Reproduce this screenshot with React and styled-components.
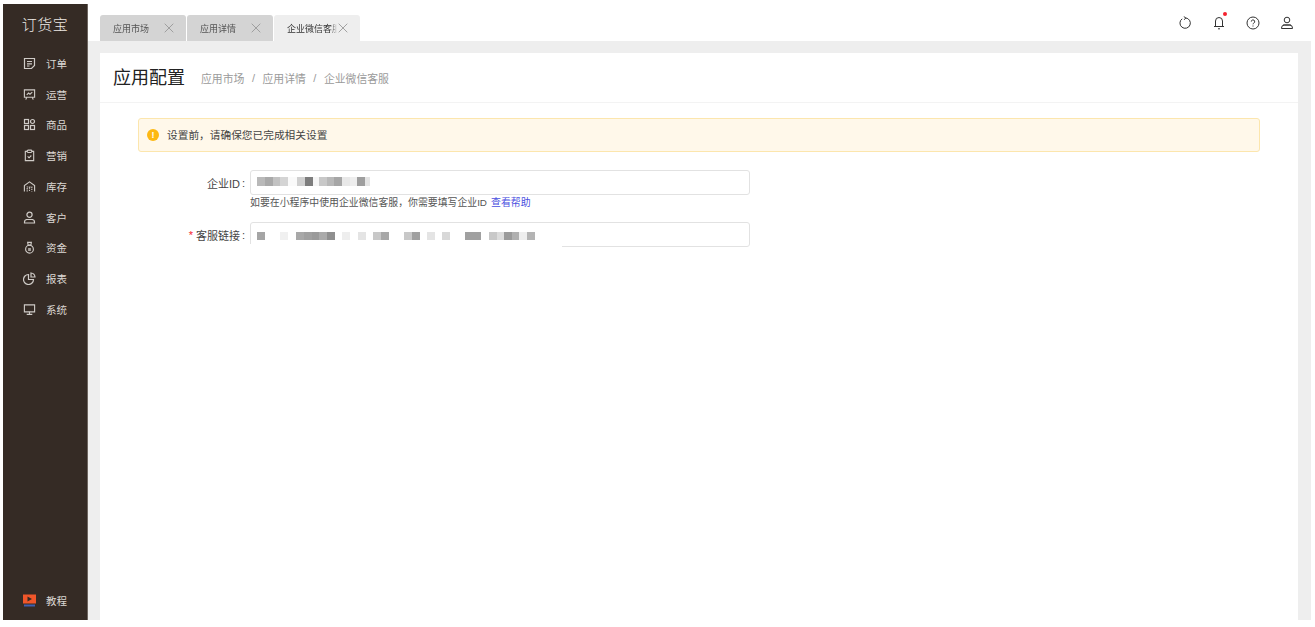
import { Component } from "react";
import styled, { createGlobalStyle } from "styled-components";

const GlobalStyle = createGlobalStyle`
  html, body {
    margin: 0;
    padding: 0;
    background: #fff;
  }
  * {
    box-sizing: border-box;
  }
  body {
    font-family: "Liberation Sans", "Noto Sans CJK SC", sans-serif;
  }
`;

const Page = styled.div`
  display: flex;
  width: 1315px;
  height: 627px;
  padding: 4px 4px 7px 3px;
  overflow: hidden;
`;

const Sidebar = styled.nav`
  display: flex;
  flex-direction: column;
  width: 85px;
  flex: none;
  background: #352b25;
  border-right: 1px solid #6e6660;
`;

const Logo = styled.div`
  height: 41px;
  display: flex;
  align-items: center;
  justify-content: center;
  color: #eeeae6;
  font-size: 15px;
  letter-spacing: 0.5px;
  font-weight: 300;
  padding-bottom: 2px;
`;

const Menu = styled.div`
  display: flex;
  flex-direction: column;
  padding-top: 3px;
  flex: 1;
`;

const MenuItem = styled.div`
  height: 30.75px;
  display: flex;
  align-items: center;
  gap: 10px;
  padding-left: 20px;
  color: #dcd8d4;
  font-size: 10.5px;
  svg {
    flex: none;
    width: 13px;
    height: 13px;
    color: #cfcbc7;
  }
`;

const Tutorial = styled(MenuItem)`
  height: 31px;
  margin-bottom: 4px;
`;

const Main = styled.div`
  flex: 1;
  display: flex;
  flex-direction: column;
  min-width: 0;
`;

const TopBar = styled.header`
  height: 37px;
  display: flex;
  align-items: flex-end;
  justify-content: space-between;
  padding-left: 12px;
`;

const Tabs = styled.div`
  display: flex;
  gap: 1px;
`;

const Tab = styled.div`
  width: 86px;
  height: 26px;
  display: flex;
  align-items: center;
  gap: 1px;
  padding-left: 13px;
  border-radius: 3px 3px 0 0;
  font-size: 9px;
  color: ${(props) => (props.$active ? "#333" : "#555")};
  background: ${(props) => (props.$active ? "#eeeeee" : "#d4d4d4")};
  white-space: nowrap;
`;

const TabLabel = styled.span`
  width: 50px;
  overflow: hidden;
  flex: none;
  mask-image: linear-gradient(to right, #000 88%, transparent 100%);
`;

const Tools = styled.div`
  display: flex;
  align-items: center;
  gap: 20px;
  align-self: flex-start;
  padding: 12px 17px 0 0;
`;

const Bell = styled.span`
  position: relative;
  display: flex;
  margin: 0 1px;
  &::after {
    content: "";
    position: absolute;
    top: -4px;
    right: -2px;
    width: 4px;
    height: 4px;
    border-radius: 50%;
    background: #f5222d;
  }
`;

const Workspace = styled.div`
  flex: 1;
  background: #eeeeee;
  padding: 12px 13px 0 12px;
  display: flex;
  min-height: 0;
`;

const Card = styled.main`
  flex: 1;
  background: #fff;
  display: flex;
  flex-direction: column;
`;

const PageHead = styled.div`
  height: 50px;
  display: flex;
  align-items: center;
  padding-left: 13px;
  border-bottom: 1px solid #f3f3f3;
`;

const PageTitle = styled.h1`
  margin: 0 16px 0 0;
  font-size: 18px;
  line-height: 24px;
  font-weight: 400;
  color: #222;
`;

const Crumb = styled.span`
  font-size: 10.85px;
  color: #9a9a9a;
`;

const CrumbSep = styled.span`
  font-size: 11px;
  color: #9a9a9a;
  margin: 0 7.5px;
`;

const Body = styled.div`
  padding: 15px 38px 0 38px;
`;

const Alert = styled.div`
  height: 34px;
  display: flex;
  align-items: center;
  gap: 8px;
  padding: 0 0 1px 8px;
  background: #fff8ea;
  border: 1px solid #fce6ad;
  border-radius: 3px;
  font-size: 10.7px;
  color: #444;
`;

const AlertIcon = styled.span`
  width: 12px;
  height: 12px;
  border-radius: 50%;
  background: #fdb813;
  color: #fff;
  font-size: 9px;
  font-weight: 700;
  line-height: 12px;
  text-align: center;
`;

const Form = styled.div`
  display: flex;
  flex-direction: column;
  margin-top: 18px;
`;

const Row = styled.div`
  display: flex;
  align-items: flex-start;
`;

const FieldLabel = styled.label`
  width: 112px;
  height: 25px;
  padding-right: 5px;
  flex: none;
  display: flex;
  align-items: center;
  justify-content: flex-end;
  font-size: 11px;
  color: #444;
`;

const Required = styled.span`
  color: #f5222d;
  margin-right: 3px;
`;

const Colon = styled.span`
  margin-left: 2px;
`;

const Field = styled.div`
  width: 500px;
`;

const InputBox = styled.div`
  position: relative;
  height: 25px;
  display: flex;
  align-items: center;
  padding-left: 6px;
  border: 1px solid #e2e2e2;
  border-radius: 3px;
`;

// the mosaic in the screenshot also wiped out part of the bottom border
const WipedBorder = styled.span`
  position: absolute;
  left: -1px;
  bottom: -1px;
  width: ${(props) => props.$w}px;
  height: 3px;
  background: #fff;
`;

const Mosaic = styled.div`
  display: flex;
  height: ${(props) => props.$h}px;
  margin-top: ${(props) => props.$top}px;
`;

const Cell = styled.i`
  width: ${(props) => props.$w}px;
  background: ${(props) => props.$c};
`;

const Hint = styled.div`
  font-size: 9.9px;
  line-height: 16px;
  height: 27px;
  color: #555;
`;

const HelpLink = styled.a`
  color: #4a4fe0;
  margin-left: 4px;
`;

const stroke = { fill: "none", stroke: "currentColor", strokeWidth: 1.2 };

const icons = {
  order: (
    <svg viewBox="0 0 13 13" {...stroke}>
      <path d="M1.5 1.5h10v7l-3 3h-7z" />
      <path d="M4 4.500h5M4 6.800h5M4 9h2.500" />
    </svg>
  ),
  ops: (
    <svg viewBox="0 0 14 13" {...stroke}>
      <path d="M1.500 1.500h11v8h-11z" />
      <path d="M4 7l2-2 1.500 1.200L10 4M4 9.500l-1 2.500M10 9.500l1 2.500" />
    </svg>
  ),
  goods: (
    <svg viewBox="0 0 13 13" {...stroke}>
      <rect x="1.500" y="1.500" width="4" height="4" />
      <circle cx="9.500" cy="3.500" r="2" />
      <rect x="1.500" y="7.500" width="4" height="4" />
      <rect x="7.500" y="7.500" width="4" height="4" />
    </svg>
  ),
  market: (
    <svg viewBox="0 0 13 14" {...stroke}>
      <path d="M4 2.500H2v10h9v-10H9" />
      <rect x="4" y="1.200" width="5" height="2.600" rx="1" />
      <path d="M4.500 8l1.500 1.500 2.500-2.500" />
    </svg>
  ),
  stock: (
    <svg viewBox="0 0 14 13" {...stroke}>
      <path d="M1.500 12V5.500L7 1.500l5.500 4V12" />
      <path d="M4.500 12V7h5v5M7 7.500v4" strokeDasharray="1.400 1" />
    </svg>
  ),
  customer: (
    <svg viewBox="0 0 13 13" {...stroke}>
      <circle cx="6.500" cy="3.800" r="2.600" />
      <path d="M3 8.500h7M1.500 12h10V11a2.500 2.500 0 0 0-2.500-2.500H4A2.500 2.500 0 0 0 1.500 11z" />
    </svg>
  ),
  money: (
    <svg viewBox="0 0 13 14" {...stroke}>
      <path d="M4.500 1.500h4L8 4.500H5z" />
      <circle cx="6.500" cy="8.800" r="4.200" />
      <path d="M5 8.500h3M5 10h3" />
    </svg>
  ),
  report: (
    <svg viewBox="0 0 13 13" {...stroke}>
      <path d="M5.500 2.500a5 5 0 1 0 5 5h-5z" />
      <path d="M8 1a4.500 4.500 0 0 1 4 4H8z" />
    </svg>
  ),
  system: (
    <svg viewBox="0 0 14 13" {...stroke}>
      <path d="M1.500 1.500h11v7.500h-11z" />
      <path d="M7 9v2.500M4 11.800h6" />
    </svg>
  ),
};

const menu = [
  ["order", "订单"],
  ["ops", "运营"],
  ["goods", "商品"],
  ["market", "营销"],
  ["stock", "库存"],
  ["customer", "客户"],
  ["money", "资金"],
  ["report", "报表"],
  ["system", "系统"],
];

const tabs = [
  { label: "应用市场" },
  { label: "应用详情" },
  { label: "企业微信客服", active: true },
];

// blurred ids, [width, colour]
const idCells = [
  [8, "#b9b9b9"], [8, "#a9a9a9"], [7, "#c2c2c2"], [8, "#d4d4d4"], [9, "#fafafa"], [8, "#d0d0d0"],
  [8, "#7d7d7d"], [6, "#f5f5f5"], [8, "#c8c8c8"], [7, "#b8b8b8"], [8, "#a6a6a6"], [8, "#e8e8e8"],
  [7, "#eeeeee"], [8, "#9e9e9e"], [5, "#e4e4e4"],
];

const urlCells = [
  [8, "#a5a5a5"], [15, "#fff"], [8, "#f0f0f0"], [8, "#fff"], [8, "#a8a8a8"], [8, "#a0a0a0"],
  [7, "#9a9a9a"], [8, "#aaaaaa"], [8, "#8f8f8f"], [7, "#fff"], [8, "#eeeeee"], [8, "#fff"],
  [8, "#e4e4e4"], [7, "#fff"], [8, "#c8c8c8"], [8, "#a8a8a8"], [15, "#fff"],
  [8, "#c8c8c8"], [8, "#a0a0a0"], [7, "#fff"], [8, "#e4e4e4"], [7, "#fff"], [8, "#d8d8d8"],
  [15, "#fff"], [16, "#a0a0a0"], [8, "#fff"], [8, "#c8c8c8"], [7, "#dcdcdc"], [8, "#9a9a9a"],
  [7, "#b0b0b0"], [8, "#eeeeee"], [8, "#b4b4b4"],
];

const CloseIcon = () => (
  <svg width="10" height="10" viewBox="0 0 10 10" fill="none" stroke="#999" strokeWidth="0.9">
    <path d="M0.7 0.7l8.600 8.600M9.300 0.7L0.7 9.300" />
  </svg>
);

class App extends Component {
  renderCells(cells, height, top) {
    return (
      <Mosaic $h={height} $top={top}>
        {cells.map(([w, c], i) => (
          <Cell key={i} $w={w} $c={c} />
        ))}
      </Mosaic>
    );
  }

  render() {
    return (
      <Page>
        <GlobalStyle />
        <Sidebar>
          <Logo>订货宝</Logo>
          <Menu>
            {menu.map(([icon, label]) => (
              <MenuItem key={label}>
                {icons[icon]}
                <span>{label}</span>
              </MenuItem>
            ))}
          </Menu>
          <Tutorial>
            <svg viewBox="0 0 13 12">
              <rect x="0" y="0" width="13" height="9" fill="#f0562a" />
              <path d="M4.500 2l4.500 2.500L4.500 7z" fill="#352b25" />
              <rect x="1" y="10" width="11" height="2" fill="#3f5fb0" />
            </svg>
            <span>教程</span>
          </Tutorial>
        </Sidebar>
        <Main>
          <TopBar>
            <Tabs>
              {tabs.map((tab) => (
                <Tab key={tab.label} $active={tab.active}>
                  <TabLabel>{tab.label}</TabLabel>
                  <CloseIcon />
                </Tab>
              ))}
            </Tabs>
            <Tools>
              <svg width="14" height="14" viewBox="0 0 14 14" fill="none" stroke="#333" strokeWidth="1">
                <path d="M4.200 2.800a5.200 5.200 0 1 0 3.300-.9" />
                <path d="M5.800 0.600L7.800 1.900 6.200 3.800" />
              </svg>
              <Bell>
                <svg width="12" height="14" viewBox="0 0 12 14" fill="none" stroke="#333" strokeWidth="1">
                  <path d="M2.500 10.500V5a3.500 3.500 0 0 1 7 0v5.500M1 10.500h10M5 12.800h2" />
                </svg>
              </Bell>
              <svg width="14" height="14" viewBox="0 0 14 14" fill="none" stroke="#333" strokeWidth="1">
                <circle cx="7" cy="7" r="6" />
                <path d="M5.300 5.600a1.700 1.700 0 1 1 2.500 1.500c-.6.300-.8.700-.8 1.200M7 9.500v1" />
              </svg>
              <svg width="14" height="14" viewBox="0 0 14 14" fill="none" stroke="#333" strokeWidth="1">
                <circle cx="7" cy="4" r="2.800" />
                <path d="M3 9h8M1.500 12.500h11V12a3 3 0 0 0-3-3h-5a3 3 0 0 0-3 3z" />
              </svg>
            </Tools>
          </TopBar>
          <Workspace>
            <Card>
              <PageHead>
                <PageTitle>应用配置</PageTitle>
                <Crumb>应用市场</Crumb>
                <CrumbSep>/</CrumbSep>
                <Crumb>应用详情</Crumb>
                <CrumbSep>/</CrumbSep>
                <Crumb>企业微信客服</Crumb>
              </PageHead>
              <Body>
                <Alert>
                  <AlertIcon>!</AlertIcon>
                  设置前，请确保您已完成相关设置
                </Alert>
                <Form>
                  <Row>
                    <FieldLabel>
                      企业ID<Colon>:</Colon>
                    </FieldLabel>
                    <Field>
                      <InputBox>{this.renderCells(idCells, 9, -2)}</InputBox>
                      <Hint>
                        如要在小程序中使用企业微信客服，你需要填写企业ID
                        <HelpLink>查看帮助</HelpLink>
                      </Hint>
                    </Field>
                  </Row>
                  <Row>
                    <FieldLabel>
                      <Required>*</Required>客服链接<Colon>:</Colon>
                    </FieldLabel>
                    <Field>
                      <InputBox>
                        {this.renderCells(urlCells, 8, 2)}
                        <WipedBorder $w={312} />
                      </InputBox>
                    </Field>
                  </Row>
                </Form>
              </Body>
            </Card>
          </Workspace>
        </Main>
      </Page>
    );
  }
}

export default App;
